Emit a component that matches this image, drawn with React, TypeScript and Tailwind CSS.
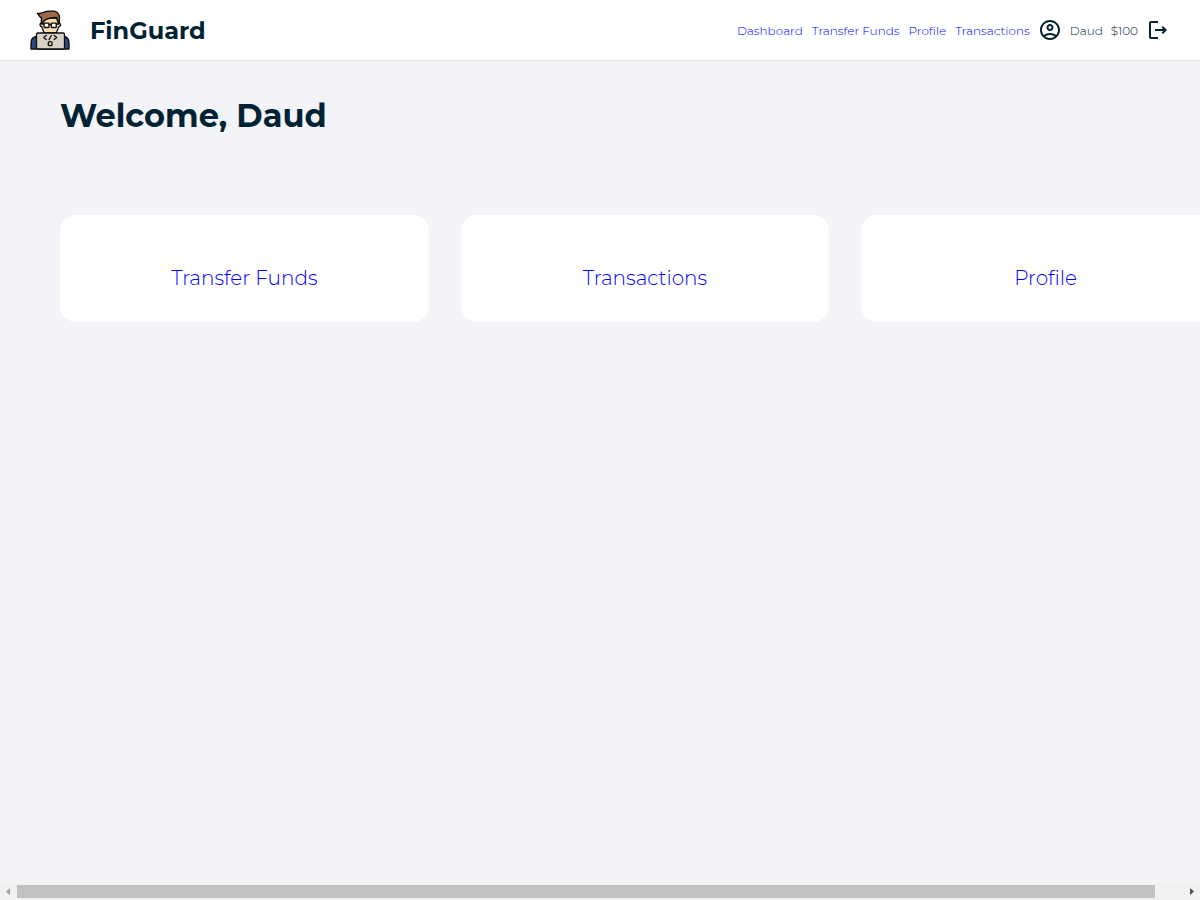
import type { ReactNode } from "react";

const navLinks = [
  { label: "Dashboard", href: "#dashboard" },
  { label: "Transfer Funds", href: "#transfer" },
  { label: "Profile", href: "#profile" },
  { label: "Transactions", href: "#transactions" },
];

const cards = [
  { label: "Transfer Funds", href: "#transfer" },
  { label: "Transactions", href: "#transactions" },
  { label: "Profile", href: "#profile" },
];

function Logo() {
  return (
    <svg viewBox="0 0 40 40" className="size-10 shrink-0" stroke="#0b0b0b" strokeWidth="1.3" strokeLinejoin="round" strokeLinecap="round" aria-hidden="true">
      <path d="M1 39V33c0-3.500 2-6 5.500-6.500h27.500C37.500 27 39 29.500 39 33v6z" fill="#2b4a80" />
      <path d="M11.500 13c-2 0-2 3.700.3 3.700.5 2.600 2 4.300 2.200 6.300h12.500c.2-2 1.700-3.700 2.200-6.300 2.300 0 2.300-3.700.3-3.700V8h-17.500z" fill="#f9dcae" />
      <path d="M11.500 13V8C9.500 6.500 8.500 5 7.500 3.300c2 .5 4 0 6-.9C16.500 1 20 .8 24 1.200c4.500.4 6 4.300 5.300 8.300L29 12.500h-1L26.500 7.500c-3 0-8 .2-12 3L12.500 13z" fill="#9c6848" />
      <g fill="#fff" strokeWidth="1.300">
        <rect x="14" y="13.200" width="5" height="4.300" rx=".5" />
        <rect x="21.300" y="13.200" width="5" height="4.300" rx=".5" />
      </g>
      <path d="M11.500 14h2.500M19 14.500h2.300M26.300 14h2.500" fill="none" />
      <rect x="6.500" y="23" width="28" height="16" rx="1.500" fill="#d7d0c4" />
      <path d="M16.200 25.500l-2.500 2 2.500 2M24.200 25.500l2.500 2-2.500 2M21.400 25.500l-2.400 4.200" fill="none" />
      <circle cx="20.200" cy="33.700" r="2" fill="none" />
    </svg>
  );
}

function Icon({ children }: { children: ReactNode }) {
  return (
    <svg viewBox="0 0 24 24" className="size-6" fill="currentColor" aria-hidden="true">
      {children}
    </svg>
  );
}

export default function App() {
  return (
    <div className="flex min-h-screen flex-col overflow-x-hidden bg-[#f2f4f8] font-['Montserrat',sans-serif] text-[#002233]">
      <header className="flex h-[61px] items-center justify-between border-b border-[#e2e2e2] bg-white px-[30px]">
        <div className="flex items-center gap-5">
          <Logo />
          <span className="text-2xl leading-[33px] font-bold">FinGuard</span>
        </div>
        <div className="flex items-center gap-2 text-xs leading-[21px] font-light whitespace-nowrap">
          <nav className="flex gap-[9px]">
            {navLinks.map((l) => (
              <a key={l.label} href={l.href} className="text-[#0000ff]">
                {l.label}
              </a>
            ))}
          </nav>
          <Icon>
            <path d="M12 2C6.480 2 2 6.480 2 12s4.480 10 10 10 10-4.480 10-10S17.520 2 12 2zM7.350 18.500C8.660 17.560 10.260 17 12 17s3.340.56 4.650 1.500C15.340 19.440 13.740 20 12 20s-3.340-.56-4.650-1.500zm10.790-1.380C16.450 15.800 14.320 15 12 15s-4.450.8-6.140 2.120C4.700 15.730 4 13.950 4 12c0-4.420 3.580-8 8-8s8 3.580 8 8c0 1.950-.7 3.730-1.860 5.120zM12 6c-1.930 0-3.500 1.570-3.500 3.500S10.070 13 12 13s3.500-1.570 3.500-3.500S13.930 6 12 6zm0 5c-.83 0-1.500-.67-1.500-1.500S11.170 8 12 8s1.500.67 1.500 1.500S12.830 11 12 11z" />
          </Icon>
          <span>Daud</span>
          <span>$100</span>
          <button type="button" aria-label="Log out">
            <Icon>
              <path d="M17 8l-1.410 1.410L17.170 11H9v2h8.170l-1.580 1.580L17 16l4-4-4-4zM5 5h7V3H5c-1.100 0-2 .9-2 2v14c0 1.100.9 2 2 2h7v-2H5V5z" />
            </Icon>
          </button>
        </div>
      </header>

      <main className="grow px-[60px] pt-[35px]">
        <h1 className="text-[32px] leading-[39px] font-bold">Welcome, Daud</h1>
        <div className="mt-20 grid w-[calc(100%+90px)] grid-cols-3 gap-8">
          {cards.map((c) => (
            <section key={c.label} className="rounded-2xl bg-white px-5 pt-[50px] pb-[31px] text-center">
              <a href={c.href} className="block text-xl leading-[26px] font-light text-[#0000ff]">
                {c.label}
              </a>
            </section>
          ))}
        </div>
      </main>

      <div className="flex h-[17px] items-center bg-[#f1f1f1]" aria-hidden="true">
        <svg viewBox="0 0 17 17" className="size-[17px]">
          <path d="M10 5v7L6 8.500z" fill="#a3a3a3" />
        </svg>
        <div className="h-[13px] grow bg-[#c1c1c1]" />
        <div className="w-7" />
        <svg viewBox="0 0 17 17" className="size-[17px]">
          <path d="M7 5v7l4-3.500z" fill="#505050" />
        </svg>
      </div>
    </div>
  );
}
